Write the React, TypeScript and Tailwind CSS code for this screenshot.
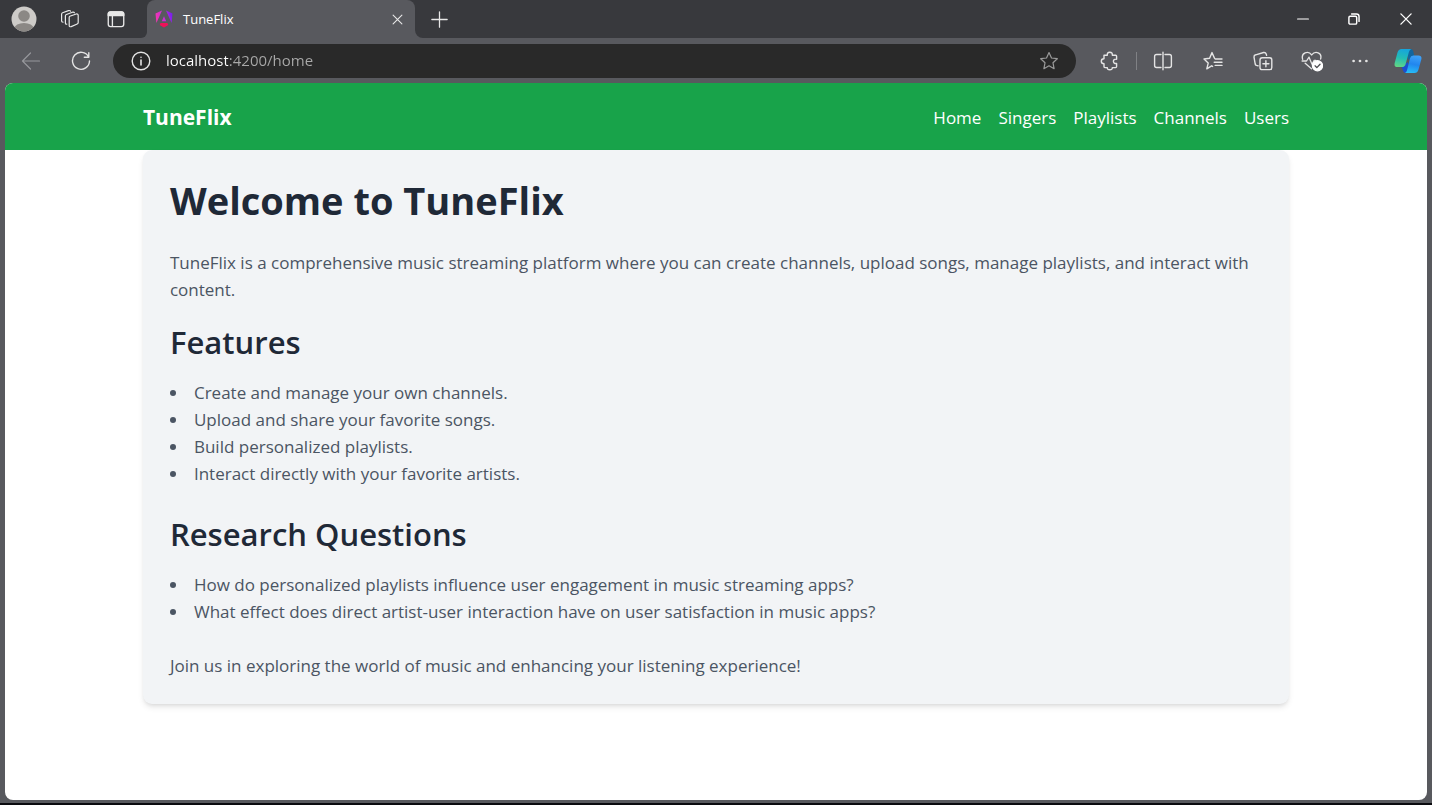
import type { ReactNode } from 'react';

const features = [
  'Create and manage your own channels.',
  'Upload and share your favorite songs.',
  'Build personalized playlists.',
  'Interact directly with your favorite artists.',
];

const questions = [
  'How do personalized playlists influence user engagement in music streaming apps?',
  'What effect does direct artist-user interaction have on user satisfaction in music apps?',
];

const links = ['Home', 'Singers', 'Playlists', 'Channels', 'Users'];

function Icon({ size = 20, width = 1.2, children }: { size?: number; width?: number; children: ReactNode }) {
  return (
    <svg
      width={size}
      height={size}
      viewBox="0 0 20 20"
      fill="none"
      stroke="currentColor"
      strokeWidth={width}
      strokeLinecap="round"
      strokeLinejoin="round"
      aria-hidden="true"
    >
      {children}
    </svg>
  );
}

function IconButton({ label, className = '', children }: { label: string; className?: string; children: ReactNode }) {
  return (
    <button type="button" aria-label={label} className={`flex h-8 shrink-0 items-center justify-center ${className}`}>
      {children}
    </button>
  );
}

function AngularLogo() {
  return (
    <svg width="18" height="18" viewBox="0 0 18 18" aria-hidden="true">
      <defs>
        <linearGradient id="angular" x1="0" y1="0.3" x2="1" y2="0.1">
          <stop offset="0" stopColor="#f035b4" />
          <stop offset="0.5" stopColor="#c32be0" />
          <stop offset="1" stopColor="#6a1cf0" />
        </linearGradient>
      </defs>
      <path fill="url(#angular)" d="M11 0.5 17.5 3.5 16.6 13ZM7 0.5 0.5 3.5 1.4 13ZM9 6.2 11.2 11.2H6.8Z" />
      <path fill="#f0125a" d="M13.3 15 9 17.6 4.7 15 5.6 13H12.4Z" />
    </svg>
  );
}

function CopilotLogo() {
  return (
    <svg width="28" height="26" viewBox="0 0 28 26" aria-hidden="true">
      <defs>
        <linearGradient id="cpLeft" x1="0.5" y1="0" x2="0.3" y2="1">
          <stop offset="0" stopColor="#16a5dc" />
          <stop offset="0.5" stopColor="#23bdb5" />
          <stop offset="1" stopColor="#62d684" />
        </linearGradient>
        <linearGradient id="cpRight" x1="0.6" y1="0" x2="0.4" y2="1">
          <stop offset="0" stopColor="#3fa2f8" />
          <stop offset="0.5" stopColor="#2186ee" />
          <stop offset="1" stopColor="#27bdf6" />
        </linearGradient>
      </defs>
      <path fill="#12669f" d="M13 1H16.5Q18.6 1 19.2 3L20.2 7.5 14 12Z" />
      <path fill="#1b4fd0" d="M7.5 18.5 14 14 16 25H12Q9.8 25 9.2 23Z" />
      <path fill="url(#cpLeft)" d="M7.5 1H17.5Q15.6 1.4 14.9 4L11.6 16.2Q10.8 19 8 19H3.5Q-0.2 19 0.7 15L3.5 4.5Q4.5 1 7.5 1Z" />
      <path fill="url(#cpRight)" d="M19.4 7.5H24.5Q28.2 7.5 27.3 11.5L24.5 21.5Q23.5 25 20.5 25H11Q12.4 24.6 13.1 22L16 10.2Q16.7 7.5 19.4 7.5Z" />
    </svg>
  );
}

function TitleBar() {
  return (
    <div className="flex h-[38px] shrink-0 bg-[#38393d] text-[#e8e8e8]">
      <div className="flex items-center">
        <IconButton label="Profile" className="w-12">
          <svg width="26" height="26" viewBox="0 0 26 26" aria-hidden="true">
            <clipPath id="avatar">
              <circle cx="13" cy="13" r="12.5" />
            </clipPath>
            <g clipPath="url(#avatar)">
              <rect width="26" height="26" fill="#cdcbc8" />
              <circle cx="13" cy="10" r="5.8" fill="#8b8885" />
              <ellipse cx="13" cy="22.5" rx="9.5" ry="5.5" fill="#8b8885" />
            </g>
          </svg>
        </IconButton>
        <IconButton label="Workspaces" className="w-[43px]">
          <Icon>
            <path d="M9.8 7.2 16.2 5Q18.2 4.6 18.2 6.4V13.5Q18.2 14.6 17.2 15L11.2 17.6Q9.2 18.2 9.2 16.4V8.4Q9.2 7.5 9.8 7.2Z" />
            <path d="M6.8 15.2Q5.4 15.4 5.4 14V7Q5.4 5.9 6.4 5.5L12.5 3.2Q14 2.8 14.4 3.8" />
            <path d="M3 13.2Q1.6 13.2 1.6 12V5.2Q1.6 4.1 2.6 3.7L8.5 1.6Q10 1.2 10.6 2.2" />
          </Icon>
        </IconButton>
        <IconButton label="Tab actions" className="w-[50px]">
          <Icon size={18} width={1.5}>
            <rect x="1.4" y="2" width="17.2" height="16.4" rx="2.6" />
            <path fill="currentColor" d="M1.4 6.2V4.4Q1.4 2 4 2H16Q18.6 2 18.6 4.4V6.2Z" />
            <path d="M6 6.5V18.2" />
          </Icon>
        </IconButton>
      </div>
      <div className="flex w-[274px] bg-[#58595e]">
        <div className="h-full w-1.5 rounded-br-md bg-[#38393d]" />
        <div className="flex h-full flex-1 bg-[#38393d]">
          <div className="flex flex-1 items-center rounded-t-lg bg-[#58595e] pr-1 pl-2">
            <AngularLogo />
            <span className="ml-[10px] flex-1 pt-px text-[13px] text-white">TuneFlix</span>
            <IconButton label="Close tab" className="w-7">
              <Icon size={11} width={2}>
                <path d="M2 2 18 18M18 2 2 18" />
              </Icon>
            </IconButton>
          </div>
        </div>
      </div>
      <div className="flex flex-1 bg-[#58595e]">
        <div className="flex flex-1 items-center justify-between rounded-bl-lg bg-[#38393d]">
          <IconButton label="New tab" className="w-12">
            <Icon size={17} width={1.5}>
              <path d="M10 1V19M1 10H19" />
            </Icon>
          </IconButton>
          <div className="flex text-white">
            <IconButton label="Minimize" className="w-[51px]">
              <Icon size={12} width={2}>
                <path d="M1 10H19" />
              </Icon>
            </IconButton>
            <IconButton label="Restore" className="w-[52px]">
              <Icon size={12} width={2.4}>
                <rect x="1.5" y="5.5" width="13" height="13" rx="2" />
                <path d="M6 1.8H14Q18.4 1.8 18.4 6V14" />
              </Icon>
            </IconButton>
            <IconButton label="Close" className="w-[52px]">
              <Icon size={12} width={2.2}>
                <path d="M1.5 1.5 18.5 18.5M18.5 1.5 1.5 18.5" />
              </Icon>
            </IconButton>
          </div>
        </div>
      </div>
    </div>
  );
}

const star = 'M10 1.6 12.5 7 18.3 7.7 14 11.8 15.1 17.7 10 14.8 4.9 17.7 6 11.8 1.7 7.7 7.5 7Z';

function Toolbar() {
  return (
    <div className="flex h-[45px] shrink-0 items-center bg-[#58595e] pl-[6px] text-[#e4e4e4]">
      <IconButton label="Back" className="w-[50px] text-[#96979b]">
        <Icon>
          <path d="M18.5 10H1.5M9.5 2 1.5 10 9.5 18" />
        </Icon>
      </IconButton>
      <IconButton label="Refresh" className="w-[49px]">
        <Icon width={1.4}>
          <path d="M17.6 6A8.5 8.5 0 1 0 18.5 10M17.8 1.8V6.3H13.3" />
        </Icon>
      </IconButton>
      <div className="ml-2 flex h-[34px] flex-1 items-center rounded-full bg-[#292929] pr-[17px] pl-[18px]">
        <IconButton label="Site information" className="w-5">
          <Icon width={1.4}>
            <circle cx="10" cy="10" r="8.8" />
            <path d="M10 9V14M10 6.2V6.3" strokeWidth="1.6" />
          </Icon>
        </IconButton>
        <input
          aria-label="Address"
          defaultValue="localhost:4200/home"
          className="ml-[15px] min-w-0 flex-1 bg-[linear-gradient(90deg,#fff_62px,#a9a9a9_62px)] bg-clip-text text-[15px] text-transparent outline-none"
        />
        <IconButton label="Add to favorites" className="w-5 text-[#9a9a9a]">
          <Icon>
            <path d={star} />
          </Icon>
        </IconButton>
      </div>
      <IconButton label="Extensions" className="ml-2 w-[52px]">
        <Icon width={1.4}>
          <path d="M4 4.2H7.3Q6.9 1.3 9.8 1.3T12.3 4.2H15.6Q16.6 4.2 16.6 5.2V8.2Q13.4 7.9 13.4 10.3T16.6 12.5V15.6Q16.6 16.6 15.6 16.6H12.3Q12.5 18.7 9.8 18.7T7.3 16.6H5Q4 16.6 4 15.6V12.8Q1.3 12.8 1.3 10.3T4 7.8Z" />
        </Icon>
      </IconButton>
      <div className="h-[18px] w-px bg-[#808185]" />
      <IconButton label="Split screen" className="w-[51px]">
        <Icon width={1.4}>
          <path d="M8 3.5H3.6Q1.6 3.5 1.6 5.5V14.5Q1.6 16.5 3.6 16.5H8M12 3.5H16.4Q18.4 3.5 18.4 5.5V14.5Q18.4 16.5 16.4 16.5H12M10 1.2V18.8" />
        </Icon>
      </IconButton>
      <IconButton label="Favorites" className="w-[50px]">
        <Icon width={1.4}>
          <path d="M9.6 15.4 8.6 14.8 3.8 17.8 5.2 12.1 1 8 6.6 7.2 9 1.6 11.5 7.3M12.2 8H19M11.2 11.2H19M12.2 14.4H19" />
        </Icon>
      </IconButton>
      <IconButton label="Collections" className="w-[49px]">
        <Icon width={1.4}>
          <rect x="7" y="6.8" width="11.8" height="11.8" rx="2.2" />
          <path d="M12.9 9.7V15.7M9.9 12.7H15.9M5 14.8 3.4 14.4Q2.4 14 2.2 13L1 6.2Q.8 4.3 2.7 3.8L10.6 1.5Q12.6 1.2 13.2 3L13.6 4.4" />
        </Icon>
      </IconButton>
      <IconButton label="Browser essentials" className="w-[50px]">
        <Icon size={22}>
          <path d="M1.5 8.5C-.2 2.5 6.5.2 9.7 4.5 13 .2 19.5 2.5 17.8 8.2M1 10H5L7.3 6.5 10 13 12 9.5H13.5M3.8 12 9.5 17" />
          <circle cx="15" cy="14.3" r="4.6" fill="white" stroke="white" />
          <path d="M12.8 14.4 14.4 16 17.3 12.9" stroke="#4c4d51" />
        </Icon>
      </IconButton>
      <IconButton label="Settings and more" className="w-[46px]">
        <Icon size={16}>
          <g fill="currentColor" stroke="none">
            <circle cx="2" cy="10" r="1.7" />
            <circle cx="10" cy="10" r="1.7" />
            <circle cx="18" cy="10" r="1.7" />
          </g>
        </Icon>
      </IconButton>
      <IconButton label="Copilot" className="w-[49px]">
        <CopilotLogo />
      </IconButton>
    </div>
  );
}

function BulletList({ items }: { items: string[] }) {
  return (
    <ul className="mb-[27px] list-inside list-disc text-[#4b5563]">
      {items.map((item) => (
        <li key={item}>{item}</li>
      ))}
    </ul>
  );
}

function SectionTitle({ children }: { children: ReactNode }) {
  return <h2 className="mb-[17px] text-[31px] leading-[40px] font-semibold text-[#1f2937]">{children}</h2>;
}

export default function App() {
  return (
    <div className="flex min-h-screen flex-col border-b-2 border-[#0b0b0f] bg-[#58595e] font-['Open_Sans','Noto_Sans',sans-serif]">
      <TitleBar />
      <Toolbar />
      <div className="mx-[5px] mb-[3px] flex-1 overflow-hidden rounded-lg bg-white text-[17px] leading-[27px]">
        <header className="bg-[#18a34a] text-white">
          <div className="mx-auto flex h-[67px] w-[80.6%] items-center justify-between pt-0.5">
            <a href="#home" className="text-[21px] font-bold">
              TuneFlix
            </a>
            <nav className="flex gap-[17px]">
              {links.map((link) => (
                <a key={link} href={`#${link.toLowerCase()}`}>
                  {link}
                </a>
              ))}
            </nav>
          </div>
        </header>
        <main className="mx-auto w-[80.6%] rounded-[9px] bg-[#f2f4f6] px-[27px] pt-[27px] pb-[25px] text-[#4b5563] shadow-md">
          <h1 className="mb-[26px] text-[38px] leading-[46px] font-bold text-[#1f2937]">Welcome to TuneFlix</h1>
          <p className="mb-[19px]">
            TuneFlix is a comprehensive music streaming platform where you can create channels, upload songs, manage
            playlists, and interact with content.
          </p>
          <SectionTitle>Features</SectionTitle>
          <BulletList items={features} />
          <SectionTitle>Research Questions</SectionTitle>
          <BulletList items={questions} />
          <p>Join us in exploring the world of music and enhancing your listening experience!</p>
        </main>
      </div>
    </div>
  );
}
